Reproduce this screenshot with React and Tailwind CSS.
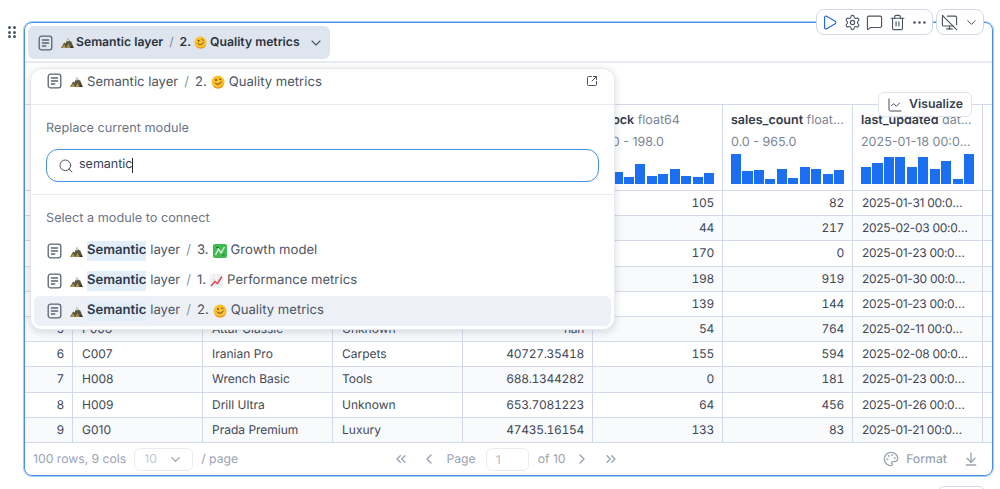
import React from 'react';
import {
    ChartLine, ChevronDown, ChevronLeft, ChevronRight, ChevronsLeft, ChevronsRight,
    Ellipsis, ArrowDownToLine, MessageSquare, MonitorOff, Palette, Play, Search,
    Settings, SquareArrowOutUpRight, Trash2,
} from 'lucide-react';

const columns = [
    { name: 'stock', type: 'float64', range: '0.0 - 198.0', bars: [20, 12, 7, 20, 8, 10, 15, 8, 7, 11] },
    { name: 'sales_count', type: 'float64', range: '0.0 - 965.0', bars: [30, 13, 14, 5, 15, 6, 17, 15, 10, 14] },
    { name: 'last_updated', type: 'datetime[ns]', range: '2025-01-18 00:00:00 - 2025-02-11', bars: [17, 21, 27, 27, 17, 27, 15, 23, 5, 30] },
];

const rows = [
    ['0', '', '', '', '', '105', '82', '2025-01-31 00:00:00'],
    ['1', '', '', '', '', '44', '217', '2025-02-03 00:00:00'],
    ['2', '', '', '', '', '170', '0', '2025-01-23 00:00:00'],
    ['3', '', '', '', '', '198', '919', '2025-01-30 00:00:00'],
    ['4', '', '', '', '', '139', '144', '2025-01-23 00:00:00'],
    ['5', 'P006', 'Attar Classic', 'Unknown', 'nan', '54', '764', '2025-02-11 00:00:00'],
    ['6', 'C007', 'Iranian Pro', 'Carpets', '40727.35418', '155', '594', '2025-02-08 00:00:00'],
    ['7', 'H008', 'Wrench Basic', 'Tools', '688.1344282', '0', '181', '2025-01-23 00:00:00'],
    ['8', 'H009', 'Drill Ultra', 'Unknown', '653.7081223', '64', '456', '2025-01-26 00:00:00'],
    ['9', 'G010', 'Prada Premium', 'Luxury', '47435.16154', '133', '83', '2025-01-21 00:00:00'],
];

const gridCols = 'grid grid-cols-[48px_repeat(7,130px)_8px]';

const NotebookIcon = () => (
    <svg width="15" height="16" viewBox="0 0 15 16" fill="none" stroke="#5b6472" strokeWidth="1.3" strokeLinecap="round" className="shrink-0">
        <rect x="1.2" y="1.2" width="12.6" height="13.6" rx="2.4" />
        <path d="M4.4 5h6.2M4.4 8h6.2M4.4 11h3.4" />
    </svg>
);

const Mountain = () => (
    <svg width="13" height="11" viewBox="0 0 13 11" className="shrink-0">
        <path d="M0 11 L3.2 5.5 L4.6 6.5 L6.8 1 L9 4.5 L10 4 L13 11 Z" fill="#59573a" />
        <path d="M5.6 4 L6.8 1 L8.2 3.4 L7 4.4 Z" fill="#ddd9c6" />
        <path d="M0.6 11 L3.2 7.2 L5 11 Z" fill="#b3964f" />
        <path d="M5.4 11 L7.4 6.4 L9.4 11 Z" fill="#a8905a" />
        <path d="M9.6 11 L10.6 8.4 L12.4 11 Z" fill="#2f3524" />
    </svg>
);

const Smile = ({ size = 13 }) => (
    <svg width={size} height={size} viewBox="0 0 14 14" className="shrink-0">
        <circle cx="7" cy="7" r="6.5" fill="#fbc02d" />
        <path d="M1.5 9.5 C3 13.5 11 14 13 8.5 C12.5 13 9 13.5 7 13.5 C4 13.5 2 12 1.5 9.5Z" fill="#f08a1d" />
        <circle cx="5" cy="5" r="0.9" fill="#5b3a10" />
        <path d="M8.4 3.9 L10 4.6" stroke="#5b3a10" strokeWidth="0.9" strokeLinecap="round" />
        <path d="M4 8 C5.5 10 8.5 9.6 10.4 7" stroke="#5b3a10" strokeWidth="0.9" fill="none" strokeLinecap="round" />
    </svg>
);

const Growth = () => (
    <svg width="14" height="14" viewBox="0 0 14 14" className="shrink-0">
        <rect width="14" height="14" rx="2" fill="#3fb950" />
        <path d="M2.5 11 L5.5 5 L8 9 L11.5 3" stroke="#dff5e0" strokeWidth="1.4" fill="none" />
        <path d="M3 3.5h3M9 11h2.5" stroke="#1f7a33" strokeWidth="1.2" />
    </svg>
);

const Trend = () => (
    <svg width="13" height="14" viewBox="0 0 13 14" className="shrink-0">
        <rect width="13" height="14" fill="#f4f4f6" />
        <path d="M0 6h13M0 10h13M4 0v14M9 0v14" stroke="#d9dce3" strokeWidth="0.6" />
        <path d="M1 12 L5 7.5 L7.5 9.5 L12 2.5" stroke="#d9434e" strokeWidth="1.4" fill="none" />
    </svg>
);

const Hl = ({ children }) => <span className="bg-[#e3eefb] font-semibold text-[#2f3a4b]">{children}</span>;

const ModuleRow = ({ number, emoji, title, active }) => (
    <div className={`flex h-[30px] items-center rounded-md pl-[13px] text-[13.1px] text-[#4b5563] ${active ? 'bg-[#edf1f7]' : ''}`}>
        <NotebookIcon />
        <span className="ml-[8px] mr-[4px]"><Mountain /></span>
        <Hl>Semantic</Hl>
        <span className="ml-1">layer</span>
        <span className="mx-[6px] text-[#8a93a3]">/</span>
        <span>{number}</span>
        <span className="mx-[4px]">{emoji}</span>
        <span>{title}</span>
    </div>
);

const HeaderCell = ({ col }) => (
    <div className="flex h-[85px] min-w-0 flex-col border-r border-[#d3d9e8] px-2 pt-[8px]">
        <div className="truncate text-[12.5px] leading-4 text-[#7b8494]">
            <span className="font-semibold text-[#333c4b]">{col.name}</span> {col.type}
        </div>
        <div className="mt-[6px] truncate text-[12.5px] leading-4 text-[#7b8494]">{col.range}</div>
        <div className="mt-[3px] flex h-[30px] items-end gap-[1.3px]">
            {col.bars.map((h, i) => (
                <div key={i} className="flex-1 bg-[#1d6ff2]" style={{ height: h }} />
            ))}
        </div>
    </div>
);

export default function App() {
    return (
        <div className="relative h-[489px] w-[1000px] overflow-hidden bg-white pl-[24px] pt-[22px] font-['Inter',sans-serif] text-[#3f4856] antialiased [text-rendering:geometricPrecision]">
            {/* drag handle */}
            <div className="absolute left-[8px] top-[26px] grid grid-cols-2 gap-x-[2px] gap-y-[1.5px]">
                {[0, 1, 2, 3, 4, 5].map((i) => (
                    <div key={i} className="h-[3px] w-[3px] rounded-full bg-[#4b5563]" />
                ))}
            </div>

            <div className="relative flex h-[454px] w-[969px] flex-col rounded-lg border border-[#4a8fe7] shadow-[0_0_0_1px_#a9cbf5]">
                <div className="flex h-[40px] shrink-0 items-start border-b-2 border-[#e6ebf2] pl-[3px] pt-[3px]">
                    <div className="flex h-[33px] w-[302px] items-center whitespace-nowrap rounded-md bg-[#dfe5ee] pl-[10px] text-[12.2px] font-semibold text-[#2a3341]">
                        <NotebookIcon />
                        <span className="ml-[8px] mr-[2px]"><Mountain /></span>
                        <span>Semantic layer</span>
                        <span className="mx-[6px] font-normal text-[#7b8494]">/</span>
                        <span>2.</span>
                        <span className="mx-[3px]"><Smile /></span>
                        <span>Quality metrics</span>
                        <ChevronDown size={16} strokeWidth={1.6} className="ml-[8px] text-[#4b5563]" />
                    </div>
                </div>
                <div className="h-[41px] shrink-0" />

                {/* table */}
                <div className="flex-1 text-xs">
                    <div className={`${gridCols} border-y border-[#d3d9e8]`}>
                        <div className="h-[85px] border-r border-[#d3d9e8]" />
                        <div className="border-r border-[#d3d9e8]" />
                        <div className="border-r border-[#d3d9e8]" />
                        <div className="border-r border-[#d3d9e8]" />
                        <div className="border-r border-[#d3d9e8]" />
                        {columns.map((col) => <HeaderCell key={col.name} col={col} />)}
                        <div />
                    </div>
                    {rows.map((row, r) => (
                        <div key={r} className={`${gridCols} h-[25.2px] border-b border-[#d3d9e8] ${r % 2 ? 'bg-[#f8fafc]' : ''}`}>
                            {row.map((cell, c) => {
                                const numeric = c === 0 || c >= 4 && c <= 6;
                                const date = c === 7;
                                return (
                                    <div key={c} className={`truncate border-r border-[#d3d9e8] leading-[24px] ${date ? 'pl-[9px] pr-[14px] tracking-[-0.3px]' : 'px-[9px]'} ${numeric ? 'pr-[8px] text-right tabular-nums tracking-[-0.3px]' : ''}`}>
                                        {cell}
                                    </div>
                                );
                            })}
                            <div />
                        </div>
                    ))}
                </div>

                {/* footer */}
                <div className="flex h-[32px] shrink-0 items-center px-2 text-[12.2px] text-[#9aa3b2]">
                    <div className="flex flex-1 items-center">
                        <span>100 rows, 9 cols</span>
                        <div className="ml-[8px] flex h-[23px] w-[59px] items-center justify-between rounded-md border border-[#e8ebf0] px-[9px] text-[#c3c9d3]">
                            <span>10</span>
                            <ChevronDown size={15} className="text-[#9aa3b2]" />
                        </div>
                        <span className="ml-[8px]">/ page</span>
                    </div>
                    <div className="flex items-center">
                        <ChevronsLeft size={16} />
                        <ChevronLeft size={16} className="ml-[12px]" />
                        <span className="ml-[9px]">Page</span>
                        <div className="ml-[10px] h-[23px] w-[43px] rounded-md border border-[#e8ebf0] pl-[9px] leading-[21px] text-[#b4bbc7]">1</div>
                        <span className="ml-[9px]">of 10</span>
                        <ChevronRight size={16} className="ml-[8px]" />
                        <ChevronsRight size={16} className="ml-[13px]" />
                    </div>
                    <div className="flex flex-1 items-center justify-end pr-[5px]">
                        <Palette size={16} />
                        <span className="ml-[7px] font-medium">Format</span>
                        <ArrowDownToLine size={16} className="ml-[16px]" />
                    </div>
                </div>

                {/* cell toolbar */}
                <div className="absolute left-[791px] top-[-14px] flex h-[26px] w-[117px] items-center justify-between rounded-lg border border-[#d3dae6] bg-white px-[4px] text-[#4b5563]">
                    <Play size={17} strokeWidth={1.6} className="text-[#2563eb]" />
                    <Settings size={17} strokeWidth={1.6} />
                    <MessageSquare size={17} strokeWidth={1.6} />
                    <Trash2 size={17} strokeWidth={1.6} />
                    <Ellipsis size={17} strokeWidth={1.8} />
                </div>
                <div className="absolute left-[911px] top-[-14px] flex h-[26px] w-[48px] items-center justify-between rounded-lg border border-[#d3dae6] bg-white px-[4px] text-[#4b5563]">
                    <MonitorOff size={17} strokeWidth={1.6} />
                    <ChevronDown size={15} strokeWidth={1.6} />
                </div>
                <div className="absolute left-[853px] top-[69px] flex h-[25px] w-[94px] items-center gap-[6px] rounded-md border border-[#dfe4ec] bg-white pl-[8px] text-[12.3px] font-semibold text-[#374151]">
                    <ChartLine size={16} strokeWidth={1.4} />
                    <span>Visualize</span>
                </div>

                {/* module popup */}
                <div className="absolute left-[5px] top-[45px] z-10 h-[262px] w-[585px] rounded-xl border border-[#e6eaf0] bg-white shadow-[0_2px_8px_rgba(60,70,90,0.2)]">
                    <div className="flex h-[36px] items-start border-b border-[#e6eaf0] pl-[16px] pr-[16px] pt-[4px] text-[13.1px] text-[#4b5563]">
                        <NotebookIcon />
                        <span className="ml-[8px] mr-[4px] mt-[3px]"><Mountain /></span>
                        <span>Semantic layer</span>
                        <span className="mx-[6px] text-[#8a93a3]">/</span>
                        <span>2.</span>
                        <span className="mx-[4px] mt-[2px]"><Smile size={14} /></span>
                        <span>Quality metrics</span>
                        <SquareArrowOutUpRight size={12} className="ml-auto mt-[2px]" />
                    </div>
                    <div className="h-[90px] border-b border-[#e6eaf0] px-[15px] pt-[14px]">
                        <div className="text-[12.7px] leading-5 text-[#6b7585]">Replace current module</div>
                        <div className="mt-[10px] flex h-[33px] items-center rounded-xl border border-[#4a8fe7] pl-[11px] text-[12.5px] text-[#374151]">
                            <Search size={16} strokeWidth={1.5} className="text-[#4b5563]" />
                            <span className="ml-[5px]">semantic</span>
                            <span className="-ml-px h-[15px] w-px bg-[#1f2937]" />
                        </div>
                    </div>
                    <div className="px-[15px] pt-[14px] text-[12.7px] leading-5 text-[#6b7585]">Select a module to connect</div>
                    <div className="mt-[7px] flex flex-col px-[3px]">
                        <ModuleRow number="3." emoji={<Growth />} title="Growth model" />
                        <ModuleRow number="1." emoji={<Trend />} title="Performance metrics" />
                        <ModuleRow number="2." emoji={<Smile size={14} />} title="Quality metrics" active />
                    </div>
                </div>
            </div>

            {/* next cell's button peeking in at the bottom */}
            <div className="absolute left-[938px] top-[486px] h-[20px] w-[47px] rounded-md border border-[#d3dae6] bg-white" />
        </div>
    );
}
